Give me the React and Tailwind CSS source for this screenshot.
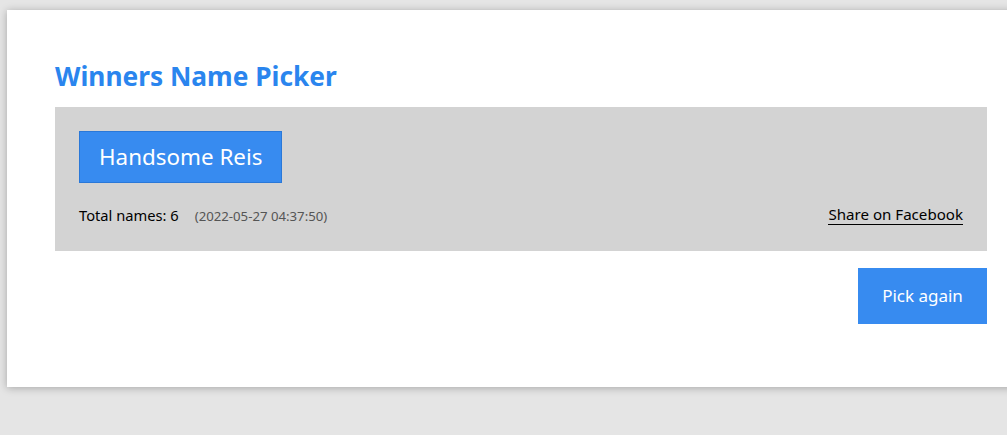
// Winners Name Picker — result card
export default function App() {
  return (
    <div className="h-[435px] w-[1007px] overflow-hidden bg-[#e5e5e5] pl-[7px] pt-[10px] font-['Noto_Sans','Open_Sans',sans-serif]">
      <div className="w-[1028px] bg-white px-12 pb-[63px] pt-[46px] shadow-[0_1px_8px_rgba(0,0,0,0.28)]">
        <h1 className="mb-[11px] text-[26.3px] font-bold leading-[40px] text-[#2a85ee]">
          Winners Name Picker
        </h1>

        {/* Winner box */}
        <div className="bg-[#d3d3d3] px-6 pb-[26px] pt-6">
          <div className="inline-block border border-[#2a78d8] bg-[#378bf0] px-[19px] py-[10px] text-[22.4px] leading-[30px] text-white">
            Handsome Reis
          </div>
          <div className="mt-[22px] flex h-[20px] items-center justify-between">
            <p className="flex items-baseline text-[14.7px] text-black">
              Total names: 6
              <span className="ml-4 text-[13.2px] text-[#555]">(2022-05-27 04:37:50)</span>
            </p>
            <a className="border-b border-black text-[15.1px] leading-[19px] text-black">
              Share on Facebook
            </a>
          </div>
        </div>

        <div className="mt-[17px] flex justify-end">
          <button className="h-14 w-[129px] bg-[#378bf0] text-[17px] text-white">
            Pick again
          </button>
        </div>
      </div>
    </div>
  );
}
